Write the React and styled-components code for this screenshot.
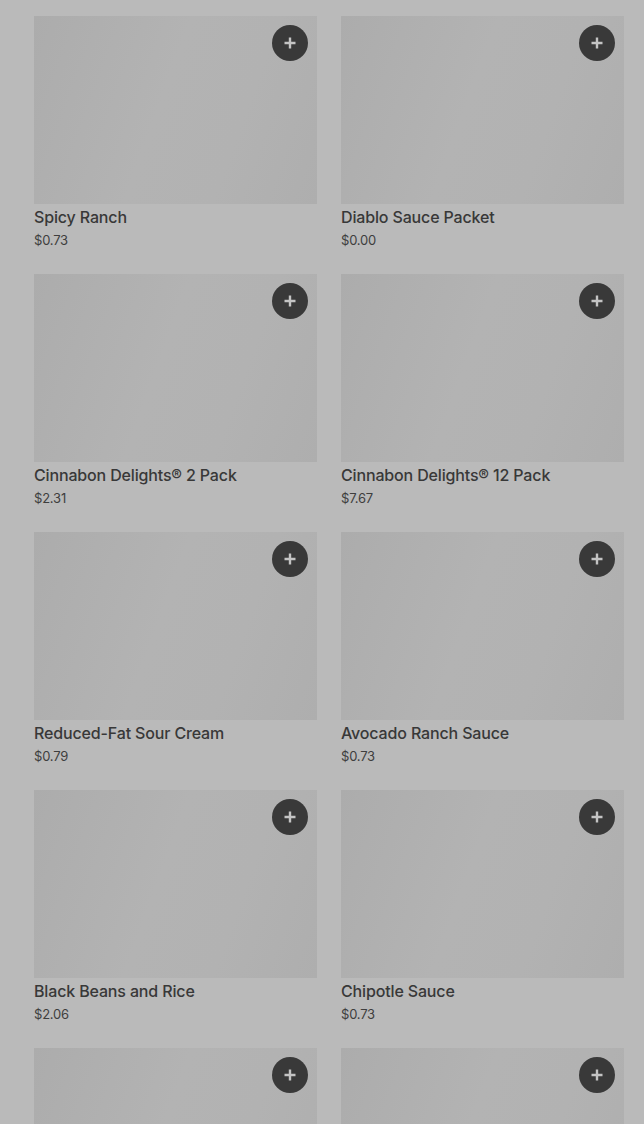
import React from "react";
import styled, { createGlobalStyle } from "styled-components";

const Global = createGlobalStyle`
  html, body { margin: 0; padding: 0; background: #bababa; }
  body { font-family: Inter, Roboto, "Noto Sans", sans-serif; }
`;

const Page = styled.div`
  padding: 16px 20px 0 34px;
  height: 1124px;
  overflow: hidden;
  box-sizing: border-box;
`;

const Grid = styled.div`
  display: grid;
  grid-template-columns: 283px 283px;
  column-gap: 24px;
  row-gap: 24px;
`;

const Card = styled.div`
  display: flex;
  flex-direction: column;
`;

const Thumb = styled.div`
  position: relative;
  height: 188px;
  background: linear-gradient(110deg, #acacac 0%, #b3b3b3 45%, #b2b2b2 70%, #aeaeae 100%);
`;

const AddButton = styled.button`
  position: absolute;
  top: 9px;
  right: 9px;
  width: 36px;
  height: 36px;
  border-radius: 50%;
  border: none;
  padding: 0;
  background: #393939;
  display: flex;
  align-items: center;
  justify-content: center;
  cursor: pointer;
`;

const Title = styled.div`
  margin-top: 1px;
  font-size: 16px;
  line-height: 24px;
  font-weight: 500;
  color: #383838;
  letter-spacing: -0.15px;
`;

const Price = styled.div`
  margin-top: 1px;
  font-size: 13px;
  line-height: 20px;
  color: #3e3e3e;
  letter-spacing: -0.2px;
`;

const Plus = () => (
  <svg width="14" height="14" viewBox="0 0 14 14">
    <path d="M7 1.5v11M1.5 7h11" stroke="#c4c4c4" strokeWidth="2.4" />
  </svg>
);

const items = [
  { id: 1, name: "Spicy Ranch", price: "$0.73" },
  { id: 2, name: "Diablo Sauce Packet", price: "$0.00" },
  { id: 3, name: "Cinnabon Delights® 2 Pack", price: "$2.31" },
  { id: 4, name: "Cinnabon Delights® 12 Pack", price: "$7.67" },
  { id: 5, name: "Reduced-Fat Sour Cream", price: "$0.79" },
  { id: 6, name: "Avocado Ranch Sauce", price: "$0.73" },
  { id: 7, name: "Black Beans and Rice", price: "$2.06" },
  { id: 8, name: "Chipotle Sauce", price: "$0.73" },
  { id: 9 },
  { id: 10 },
];

export default function App() {
  return (
    <>
      <Global />
      <Page>
        <Grid>
          {items.map(({ id, name, price }) => (
            <Card key={id}>
              <Thumb>
                <AddButton aria-label={name ? `Add ${name}` : "Add item"}>
                  <Plus />
                </AddButton>
              </Thumb>
              {name && <Title>{name}</Title>}
              {price && <Price>{price}</Price>}
            </Card>
          ))}
        </Grid>
      </Page>
    </>
  );
}
